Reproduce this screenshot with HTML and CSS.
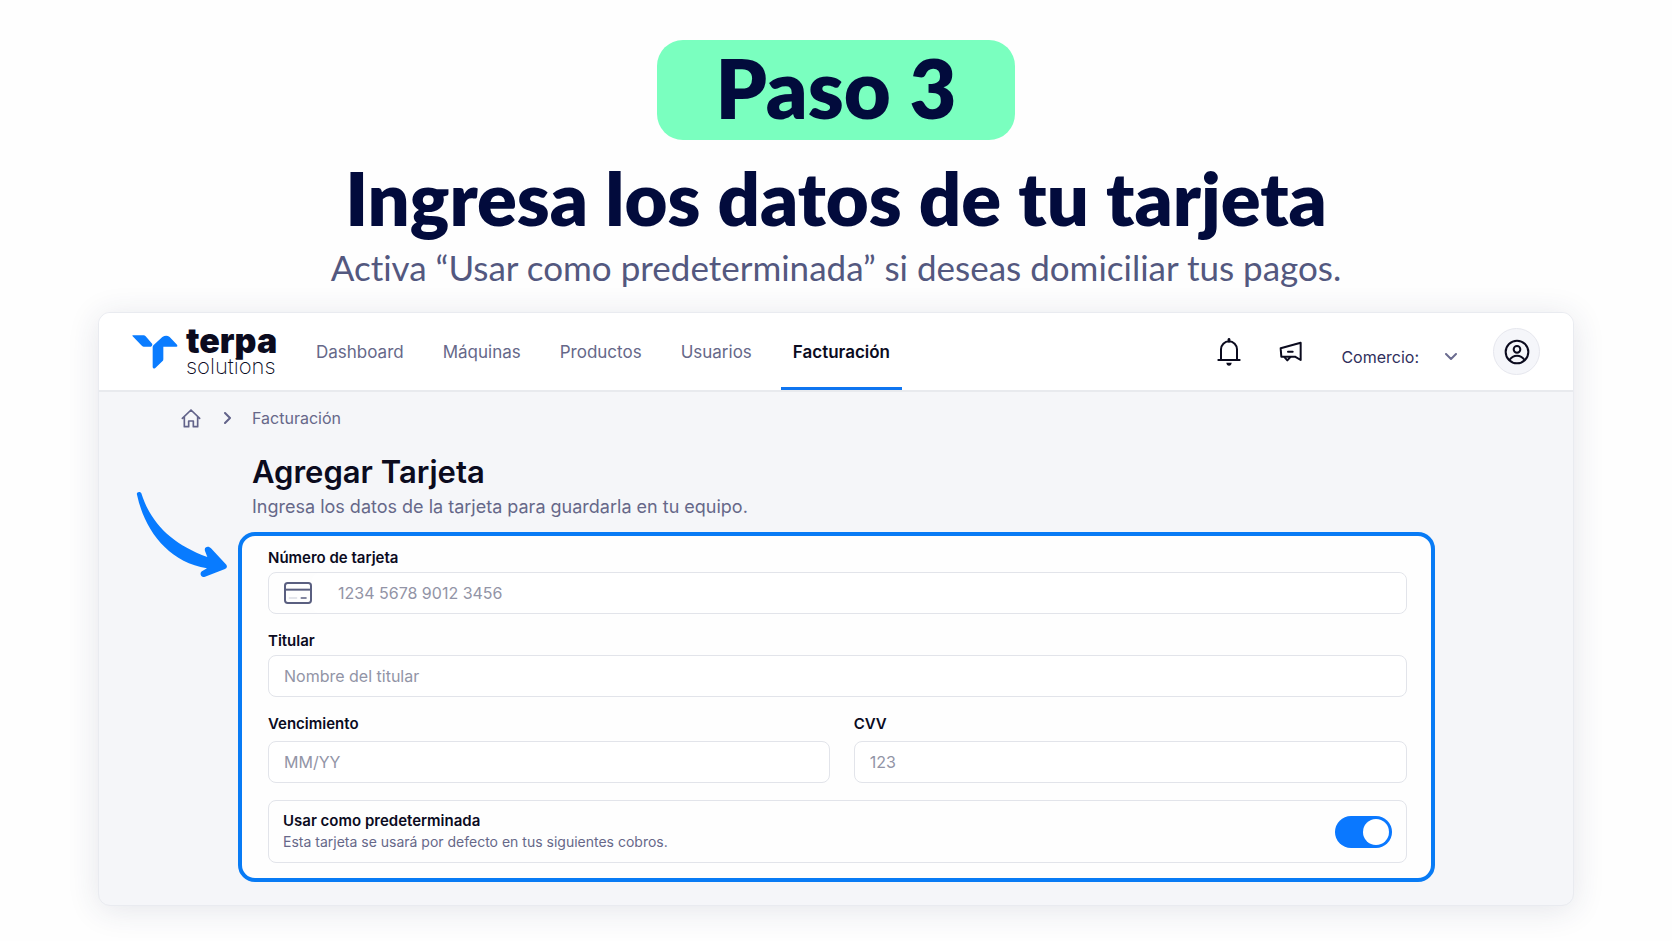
FILE: index.html
```html
<!DOCTYPE html>
<html lang="es">
<head>
    <meta charset="UTF-8">
    <meta name="viewport" content="width=device-width, initial-scale=1.0">
    <title>Paso 3 - Agregar Tarjeta</title>
    <link rel="stylesheet" href="styles.css">
</head>
<body>

<div class="intro">
    <div class="step">Paso 3</div>
    <h1>Ingresa los datos de tu tarjeta</h1>
    <p>Activa “Usar como predeterminada” si deseas domiciliar tus pagos.</p>
</div>

<div class="window">
    <header class="topbar">
        <a class="logo" href="#">
            <svg width="46" height="34" viewBox="128 101 138 102" fill="#0a7cff">
                <path d="M130 102h33q3 0 6 3l20 23q1 5-4 8h-22q-4 0-7-4l-26-27q-2-3 0-3z"/>
                <path d="M190 137q0-3 3-6l26-24q12-8 22 0l22 23q3 6-2 6h-39v38q0 4-3 6l-21 20q-6 4-8-2z"/>
            </svg>
            <span class="logo-text">
                <span class="logo-name">terpa</span>
                <span class="logo-sub">solutions</span>
            </span>
        </a>
        <nav>
            <a href="#">Dashboard</a>
            <a href="#">Máquinas</a>
            <a href="#">Productos</a>
            <a href="#">Usuarios</a>
            <a href="#" class="active">Facturación</a>
        </nav>
        <div class="actions">
            <button class="icon-btn" type="button" aria-label="Notificaciones">
                <svg width="24" height="28" viewBox="0 0 72 84" fill="none" stroke="#0b0b1e" stroke-width="6" stroke-linejoin="round" stroke-linecap="round">
                    <path d="M4 66h64M12 65V34a24 24 0 0 1 48 0v31"/>
                    <path d="M36 4v6" stroke-width="8"/>
                    <path d="M28 74h16q-1 9-8 9t-8-9z" fill="#0b0b1e" stroke="none"/>
                </svg>
            </button>
            <button class="icon-btn" type="button" aria-label="Anuncios">
                <svg width="24" height="24" viewBox="0 0 72 72" fill="none" stroke="#0b0b1e" stroke-width="6" stroke-linejoin="round" stroke-linecap="round">
                    <path d="M5 25L65 8v52L48 50H7z"/>
                    <path d="M27 35h14"/>
                    <path d="M17 52l8 9 9-10"/>
                </svg>
            </button>
            <button class="shop" type="button">Comercio:
                <svg width="12" height="8" viewBox="0 0 12 8" fill="none" stroke="#6b6c90" stroke-width="2" stroke-linecap="round" stroke-linejoin="round"><path d="M1 1l5 5 5-5"/></svg>
            </button>
            <button class="avatar" type="button" aria-label="Mi cuenta">
                <svg width="26" height="26" viewBox="0 0 78 78" fill="none" stroke="#0b0b1e" stroke-width="6">
                    <circle cx="39" cy="39" r="34"/>
                    <circle cx="39" cy="31" r="10"/>
                    <path d="M16 63q9-13 23-13t23 13"/>
                </svg>
            </button>
        </div>
    </header>

    <main>
        <div class="breadcrumb">
            <a href="#" aria-label="Inicio">
                <svg width="20" height="20" viewBox="0 0 60 60" fill="none" stroke="#62638a" stroke-width="5" stroke-linejoin="round" stroke-linecap="round">
                    <path d="M4 31L30 6l26 25M10 27v29h13V39h14v17h13V27"/>
                </svg>
            </a>
            <svg width="8" height="12" viewBox="0 0 8 12" fill="none" stroke="#62638a" stroke-width="2" stroke-linecap="round" stroke-linejoin="round"><path d="M1 1l5 5-5 5"/></svg>
            <a href="#">Facturación</a>
        </div>

        <div class="content">
            <h2>Agregar Tarjeta</h2>
            <p class="lead">Ingresa los datos de la tarjeta para guardarla en tu equipo.</p>

            <div class="form-wrap">
                <svg class="arrow" width="110" height="105" viewBox="0 0 330 315">
                    <path fill="#087bff" d="M36 44C33 36 45 32 49 40C76 126 138 192 247 231L240 213C236 199 252 197 258 205L304 254Q309 263 300 267L240 290C227 294 222 279 232 273L246 265C128 246 58 148 36 44z"/>
                </svg>
                <form>
                    <div class="field">
                        <label for="numero">Número de tarjeta</label>
                        <div class="card-input">
                            <svg width="28" height="22" viewBox="0 0 84 66" fill="none" stroke="#5a5f80" stroke-width="6">
                                <rect x="3" y="3" width="78" height="60" rx="8"/>
                                <path d="M3 23h78"/>
                                <path d="M52 48h14" stroke-width="5" stroke-linecap="round"/>
                                <path d="M16 48h22" stroke="#d9dbe4" stroke-width="4" stroke-linecap="round"/>
                            </svg>
                            <input type="text" id="numero" placeholder="1234 5678 9012 3456">
                        </div>
                    </div>
                    <div class="field">
                        <label for="titular">Titular</label>
                        <input type="text" id="titular" placeholder="Nombre del titular">
                    </div>
                    <div class="row">
                        <div class="field">
                            <label for="vencimiento">Vencimiento</label>
                            <input type="text" id="vencimiento" placeholder="MM/YY">
                        </div>
                        <div class="field">
                            <label for="cvv">CVV</label>
                            <input type="text" id="cvv" placeholder="123">
                        </div>
                    </div>
                    <div class="default-card">
                        <div>
                            <label for="predeterminada">Usar como predeterminada</label>
                            <p>Esta tarjeta se usará por defecto en tus siguientes cobros.</p>
                        </div>
                        <input type="checkbox" id="predeterminada" class="switch" checked>
                    </div>
                </form>
            </div>
        </div>
    </main>
</div>

</body>
</html>
```
FILE: styles.css
```css
* {
    box-sizing: border-box;
}
body {
    margin: 0;
    padding: 40px 98px 36px;
    background: #fefefe;
    font-family: Inter, "Liberation Sans", sans-serif;
    color: #0b0b1e;
}
h1, h2, p {
    margin: 0;
}
a {
    color: inherit;
    text-decoration: none;
}
button {
    padding: 0;
    border: none;
    background: none;
    font-family: inherit;
    cursor: pointer;
}
svg {
    display: block;
    flex-shrink: 0;
}

/* Heading */
.intro {
    font-family: Lato, "Liberation Sans", sans-serif;
    font-variant-ligatures: none;
    text-align: center;
    color: #020b3c;
}
.step {
    display: inline-block;
    min-width: 358px;
    padding: 0 56px 4px;
    border-radius: 26px;
    background: #7affbf;
    font-size: 81px;
    font-weight: 800;
    line-height: 96px;
    vertical-align: top;
}
.intro h1 {
    margin-top: 12px;
    font-size: 74px;
    font-weight: 800;
    line-height: 92px;
}
.intro p {
    margin-top: 2px;
    font-size: 35px;
    line-height: 42px;
    color: #53587f;
}

/* App window */
.window {
    margin-top: 24px;
    border: 1px solid #e9ebf0;
    border-radius: 12px;
    background: #f5f6f9;
    box-shadow: 0 4px 32px rgba(40, 50, 90, .12);
}
.topbar {
    display: flex;
    align-items: stretch;
    height: 79px;
    padding: 0 33px;
    border-bottom: 2px solid #e8eaee;
    border-radius: 11px 11px 0 0;
    background: #fff;
}
.logo {
    display: flex;
    align-items: center;
    gap: 8px;
}
.logo-text {
    display: flex;
    flex-direction: column;
    min-width: 94px;
    padding-top: 6px;
}
.logo-name {
    font-size: 34px;
    font-weight: 900;
    line-height: 22px;
}
.logo-sub {
    font-size: 22px;
    font-weight: 200;
    line-height: 28px;
}
nav {
    display: flex;
    gap: 19px;
    margin-left: 26px;
}
nav a {
    display: flex;
    align-items: center;
    padding: 4px 10px 0;
    border-bottom: 3px solid transparent;
    font-size: 17px;
    color: #666889;
}
nav .active {
    padding: 4px 12px 0;
    border-color: #0f75f0;
    font-weight: 600;
    color: #0b0b1e;
}
.actions {
    display: flex;
    align-items: center;
    margin-left: auto;
}
.icon-btn {
    margin-right: 38px;
}
.shop {
    display: flex;
    align-items: center;
    gap: 26px;
    padding-top: 10px;
    margin-right: 36px;
    font-size: 16px;
    color: #2f2f5c;
}
.avatar {
    display: grid;
    place-items: center;
    width: 47px;
    height: 47px;
    border: 1px solid #e6e7ee;
    border-radius: 50%;
    background: #f5f6fa;
}

/* Content */
main {
    padding: 14px 138px 23px 82px;
}
.breadcrumb {
    display: flex;
    align-items: center;
    height: 24px;
    font-size: 16px;
    color: #666889;
}
.breadcrumb > svg {
    margin: 0 20px 0 23px;
}
.content {
    margin-left: 57px;
}
h2 {
    margin: 22px 0 0 14px;
    font-size: 31px;
    font-weight: 600;
    line-height: 40px;
}
.lead {
    margin-left: 14px;
    font-size: 18px;
    line-height: 30px;
    color: #666889;
}
.form-wrap {
    position: relative;
    margin-top: 10px;
}
.arrow {
    position: absolute;
    top: -52px;
    left: -113px;
}
form {
    display: flex;
    flex-direction: column;
    gap: 17px;
    padding: 12px 24px 15px 26px;
    border: 4px solid #087bf5;
    border-radius: 17px;
    background: #fefefe;
}
label {
    display: block;
    font-size: 15px;
    font-weight: 600;
    line-height: 20px;
}
.field label {
    margin-bottom: 4px;
}
input[type="text"] {
    display: block;
    width: 100%;
    height: 42px;
    padding: 0 15px;
    border: 1px solid #e2e4ea;
    border-radius: 8px;
    background: #fff;
    font-family: inherit;
    font-size: 16px;
}
input::placeholder {
    color: #9294a6;
}
.card-input {
    display: flex;
    align-items: center;
    padding-left: 15px;
    border: 1px solid #e2e4ea;
    border-radius: 8px;
}
.card-input input[type="text"] {
    height: 40px;
    padding-left: 26px;
    border: none;
}
.row {
    display: grid;
    grid-template-columns: 1.015fr 1fr;
    gap: 24px;
}
.row label {
    margin-bottom: 7px;
}
.default-card {
    display: flex;
    align-items: center;
    justify-content: space-between;
    padding: 10px 14px;
    border: 1px solid #e2e4ea;
    border-radius: 8px;
}
.default-card p {
    font-size: 14px;
    line-height: 21px;
    color: #666889;
}
.switch {
    appearance: none;
    display: flex;
    justify-content: flex-end;
    width: 57px;
    height: 32px;
    margin: 0;
    padding: 3px;
    border-radius: 16px;
    background: #0a78ff;
    cursor: pointer;
}
.switch::before {
    content: "";
    width: 26px;
    height: 26px;
    border-radius: 50%;
    background: #fff;
}
.switch:not(:checked) {
    justify-content: flex-start;
    background: #bfc3d0;
}
```
